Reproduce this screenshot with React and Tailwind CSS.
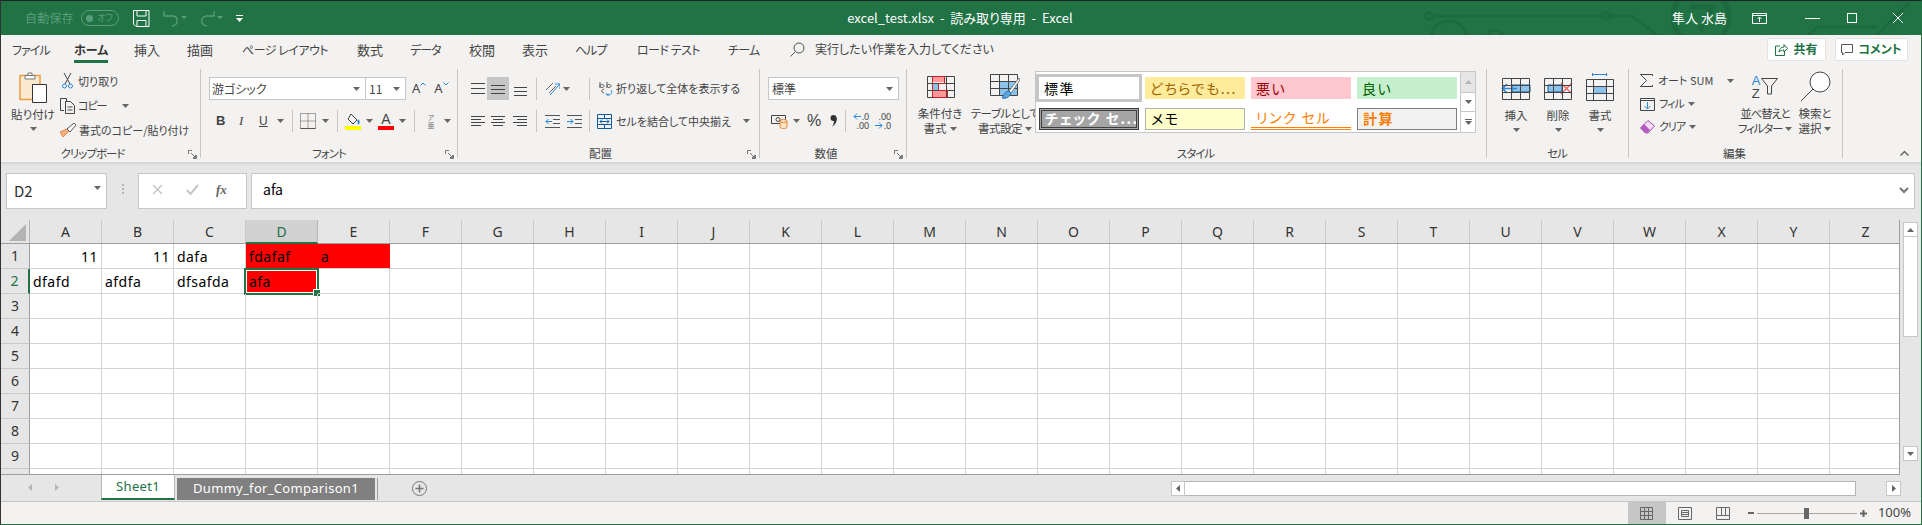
import React from 'react';

const columns = 'ABCDEFGHIJKLMNOPQRSTUVWXYZ'.split('');
const rows = [1, 2, 3, 4, 5, 6, 7, 8, 9, 10];

const Caret = ({ className = '' }) => (
  <svg width="7" height="4" viewBox="0 0 7 4" className={className}>
    <path d="M0 0h7L3.5 4z" fill="#666" />
  </svg>
);

const Launcher = () => (
  <svg width="9" height="9" viewBox="0 0 9 9" className="absolute right-[3px] bottom-[3px]" fill="none" stroke="#777">
    <path d="M.5 4V.5H4M8.5 5v3.5H5M3 3l4.5 4.5M5 7.5h2.500V5" />
  </svg>
);

const Sep = () => <div className="w-px h-[89px] mt-[6px] bg-[#c6c6c6] shrink-0" />;
const MiniSep = () => <div className="w-px h-[22px] bg-[#c6c6c6] shrink-0" />;

const Lines = ({ items }) => (
  <svg width="18" height="16" viewBox="0 0 18 16" stroke="#444" fill="none">
    {items.map(([a, b, y]) => (
      <path key={y} d={`M${a} ${y}.5H${b}`} />
    ))}
  </svg>
);

const Group = ({ width, label, launcher, children }) => (
  <div className={`relative flex flex-col shrink-0 h-full ${width}`}>
    <div className="flex-1 min-h-0">{children}</div>
    <div className="h-[18px] pt-[1px] text-center text-[11.5px] leading-[17px] text-[#444]">{label}</div>
    {launcher && <Launcher />}
  </div>
);

const BigButton = ({ icon, lines, caret, width = 'w-[42px]', tight = '' }) => (
  <div className={`flex flex-col items-center shrink-0 ${width}`}>
    <div className="h-[31px] flex items-center">{icon}</div>
    <div className={`mt-[4px] text-[11.5px] leading-[15px] text-[#444] text-center whitespace-nowrap ${tight}`}>
      {lines.map((line, i) => (
        <div key={i} className="flex items-center justify-center gap-[3px]">
          {line}
          {caret === 'inline' && i === lines.length - 1 && <Caret />}
        </div>
      ))}
    </div>
    {caret === 'below' && <Caret className="mt-[5px]" />}
  </div>
);

const TableIcon = ({ children }) => (
  <svg width="30" height="24" viewBox="0 0 30 24" fill="none">
    {children}
    <path d="M1.500 1.500h27v21h-27zM1.500 8.500h27M1.500 15.500h27M10.500 1.500v21M19.500 1.500v21" stroke="#444" />
  </svg>
);

const StyleCell = ({ className, children }) => (
  <div className={`h-[22px] w-[100px] flex items-center px-[5px] text-[14px] tracking-[1.5px] overflow-hidden whitespace-nowrap ${className}`}>
    {children}
  </div>
);

function TitleBar() {
  return (
    <div className="relative h-[34px] bg-[#217346] flex items-center text-white shrink-0 overflow-hidden">
      <svg width="501" height="34" viewBox="0 0 501 34" fill="none" stroke="#1e6a40" strokeWidth="3" className="absolute left-[1419px] top-0">
        <circle cx="9" cy="15" r="3.500" />
        <path d="M12 15h170" />
        <circle cx="186" cy="15" r="3.500" />
        <path d="M190 15h22l25 19" />
        <path d="M12 34a17 14 0 0 1 34 0M68 34a7 5 0 0 1 14 0" strokeWidth="3" />
        <circle cx="281" cy="16" r="28" strokeWidth="5" />
        <path d="M270 6h22l-12 24" strokeWidth="5" />
        <path d="M388 34l10-8h60M457 34l33-33" />
      </svg>
      <div className="relative flex items-center w-full">
        <span className="ml-[24px] text-[12px] tracking-[0.2px] text-[#5a9c7b]">自動保存</span>
        <div className="ml-[7px] w-[38px] h-[16px] rounded-full border border-[#5a9c7b] flex items-center justify-between pl-[4px] pr-[5px]">
          <span className="w-[7px] h-[7px] rounded-full bg-[#5a9c7b]" />
          <span className="text-[9px] text-[#5a9c7b]">オフ</span>
        </div>
        <svg width="17" height="17" viewBox="0 0 17 17" fill="none" stroke="#fff" className="ml-[14px]">
          <path d="M.5.500h15.500v16H3l-2.500-2.500zM4 .5v5.500h9V.5M4 16.500v-6h9v6" />
        </svg>
        <svg width="24" height="17" viewBox="0 0 24 17" fill="none" stroke="#5a9c7b" strokeWidth="1.300" className="ml-[13px]">
          <path d="M1 6h8c7 0 7 9 0 10M1 1v5h5" />
          <path d="M18 6h6l-3 3z" fill="#5a9c7b" stroke="none" />
        </svg>
        <svg width="24" height="17" viewBox="0 0 24 17" fill="none" stroke="#5a9c7b" strokeWidth="1.300" className="ml-[12px]">
          <path d="M15 6H8c-7 0-7 9 0 10M15 1v5h-5" />
          <path d="M18 6h6l-3 3z" fill="#5a9c7b" stroke="none" />
        </svg>
        <svg width="7" height="7" viewBox="0 0 7 7" fill="#fff" className="ml-[13px]">
          <path d="M0 0h7v1H0zM0 3h7L3.500 7z" />
        </svg>
        <div className="flex-1 text-center text-[13px] whitespace-pre pl-[5px]">
          excel_test.xlsx{'  -  '}読み取り専用{'  -  '}Excel
        </div>
        <span className="text-[13px] mr-[25px]">隼人 水島</span>
        <svg width="15" height="11" viewBox="0 0 15 11" fill="none" stroke="#fff" className="mr-[38px]">
          <path d="M.5.500h14v10H.5zM.5 2.500h14M7.500 9V4.500M5.500 6l2-2 2 2" />
        </svg>
        <div className="w-[15px] h-px bg-white mr-[27px]" />
        <div className="w-[10px] h-[10px] border border-white mr-[36px]" />
        <svg width="10" height="10" viewBox="0 0 10 10" stroke="#fff" className="mr-[18px]">
          <path d="M0 0l10 10M10 0L0 10" />
        </svg>
      </div>
    </div>
  );
}

function TabBar() {
  const tabs = [
    ['ファイル', 'w-[62px]', 'text-[12px] tracking-[-1px]'],
    ['ホーム', 'w-[60px]', 'text-[12px] font-bold text-[#333] border-b-[3px] border-[#217346]'],
    ['挿入', 'w-[53px]', 'text-[13px]'],
    ['描画', 'w-[55px]', 'text-[13px]'],
    ['ページ レイアウト', 'w-[115px]', 'text-[12px] tracking-[-0.5px]'],
    ['数式', 'w-[53px]', 'text-[13px]'],
    ['データ', 'w-[59px]', 'text-[12px] tracking-[-1px]'],
    ['校閲', 'w-[53px]', 'text-[13px]'],
    ['表示', 'w-[53px]', 'text-[13px]'],
    ['ヘルプ', 'w-[62px]', 'text-[12px] tracking-[-1px]'],
    ['ロード テスト', 'w-[91px]', 'text-[12px] tracking-[-0.5px]'],
    ['チーム', 'w-[62px]', 'text-[12px] tracking-[-0.7px]'],
  ];
  return (
    <div className="h-[28px] bg-[#f3f2f1] flex items-center shrink-0 pl-[11px] text-[12px] text-[#444]">
      {tabs.map(([name, slot, cls]) => (
        <div key={name} className={`h-[28px] shrink-0 ${slot}`}>
          <span className={`inline-block h-[28px] pt-[5px] leading-[19px] whitespace-nowrap ${cls}`}>{name}</span>
        </div>
      ))}
      <svg width="15" height="15" viewBox="0 0 15 15" fill="none" stroke="#555">
        <circle cx="9" cy="6" r="5" />
        <path d="M5.500 9.500L.5 14.500" />
      </svg>
      <span className="ml-[10px] whitespace-nowrap">実行したい作業を入力してください</span>
      <div className="ml-auto flex gap-[9px] mr-[13px]">
        <div className="w-[59px] h-[23px] bg-white border border-[#e3e2e1] rounded-[2px] flex items-center justify-center gap-[5px] text-[#217346] font-bold">
          <svg width="13" height="13" viewBox="0 0 13 13" fill="none" stroke="#217346">
            <path d="M5 3H.5v9.500h9V9M4 9c0-3 2-5 5-5V1.500l3.500 4L9 9V7C7 7 5 8 4 9z" />
          </svg>
          共有
        </div>
        <div className="w-[73px] h-[23px] bg-white border border-[#e3e2e1] rounded-[2px] flex items-center justify-center gap-[4px] text-[#217346] font-bold">
          <svg width="13" height="13" viewBox="0 0 13 13" fill="none" stroke="#555">
            <path d="M.5 1.500h11v8H4L1.500 12V9.500h-1z" />
          </svg>
          コメント
        </div>
      </div>
    </div>
  );
}

function Ribbon() {
  return (
    <div className="relative h-[99px] bg-[#f3f2f1] flex shrink-0 text-[11px] text-[#444]">
      <Group width="w-[199px]" label={<span className="ml-[-16px] tracking-[-1px]">クリップボード</span>} launcher>
        <div className="flex pt-[9px] pl-[10px]">
          <BigButton
            width="w-[44px]"
            caret="below"
            lines={['貼り付け']}
            icon={
              <svg width="29" height="31" viewBox="0 0 29 31">
                <path d="M1 3.500h20v24H1z" fill="#fbe9d2" stroke="#ed9c42" strokeWidth="1.500" />
                <path d="M6 3.500h10V7H6zM9 1h4v2.500H9z" fill="#fff" stroke="#777" />
                <path d="M13.500 12.500h14v18h-14z" fill="#fff" stroke="#333" />
              </svg>
            }
          />
          <div className="ml-[5px] flex flex-col mt-[-3px]">
            <div className="h-[24px] flex items-center gap-[5px] pl-[2px]">
              <svg width="11" height="16" viewBox="0 0 11 16" fill="none" stroke="#444">
                <path d="M2 0l6 11M9 0L3 11" />
                <circle cx="2.500" cy="13" r="2" stroke="#2b88d8" />
                <circle cx="8.500" cy="13" r="2" stroke="#2b88d8" />
              </svg>
              切り取り
            </div>
            <div className="h-[25px] flex items-center gap-[2px]">
              <svg width="16" height="16" viewBox="0 0 16 16" fill="none" stroke="#444">
                <path d="M4 12.500H.5V.5h6V3M5.500 3.500h5l4 4v8h-9zM7.500 9h5M7.500 12h5" />
              </svg>
              <span className="tracking-[-1px]">コピー</span>
              <Caret className="ml-[13px]" />
            </div>
            <div className="h-[24px] flex items-center gap-[3px] whitespace-nowrap">
              <svg width="16" height="15" viewBox="0 0 16 15">
                <path d="M9 8L3 14 0 9l7-3z" fill="#f4b183" stroke="#e8853a" />
                <path d="M7 6l7-6 2 2-6 7z" fill="#fff" stroke="#555" />
              </svg>
              書式のコピー/貼り付け
            </div>
          </div>
        </div>
      </Group>
      <Sep />
      <Group width="w-[256px]" label={<span className="tracking-[-1px]">フォント</span>} launcher>
        <div className="pt-[14px] pl-[8px]">
          <div className="flex items-center h-[23px]">
            <div className="w-[157px] h-[23px] bg-white border border-[#c6c6c6] flex items-center justify-between pl-[2px] pr-[5px] text-[12px] text-[#444]">
              游ゴシック
              <Caret />
            </div>
            <div className="w-[40px] h-[23px] bg-white border border-l-0 border-[#c6c6c6] flex items-center justify-between pl-[3px] pr-[5px] text-[12px]">
              11
              <Caret />
            </div>
            <span className="ml-[6px] text-[13px] font-['Noto_Sans',sans-serif]">A</span>
            <svg width="6" height="4" viewBox="0 0 6 4" fill="none" stroke="#2b88d8" className="mb-[9px]"><path d="M.5 3.500L3 1l2.500 2.500" /></svg>
            <span className="ml-[8px] text-[13px] font-['Noto_Sans',sans-serif]">A</span>
            <svg width="6" height="4" viewBox="0 0 6 4" fill="none" stroke="#2b88d8" className="mb-[9px]"><path d="M.5.500L3 3 5.500.500" /></svg>
          </div>
          <div className="mt-[10px] h-[22px] flex items-center font-['Liberation_Sans',sans-serif]">
            <span className="ml-[7px] w-[8px] font-bold text-[13px]">B</span>
            <span className="ml-[15px] w-[6px] italic text-[13px] font-['Liberation_Serif',serif]">I</span>
            <span className="ml-[14px] w-[9px] underline text-[12px]">U</span>
            <Caret className="ml-[9px]" />
            <div className="ml-[8px]"><MiniSep /></div>
            <svg width="16" height="16" viewBox="0 0 16 16" fill="none" stroke="#555" className="ml-[7px]">
              <path d="M.5.500h15v15H.5z" strokeDasharray="1 1" />
              <path d="M8 .5v15M.5 8h15" strokeDasharray="1 1" />
              <path d="M.5 15.500h15" />
            </svg>
            <Caret className="ml-[6px]" />
            <div className="ml-[8px]"><MiniSep /></div>
            <div className="ml-[7px] w-[16px] flex flex-col items-center">
              <svg width="14" height="13" viewBox="0 0 14 13" fill="none" stroke="#444">
                <path d="M5 1l6 6-4 4-5-5z" />
                <path d="M12 7c1 2 1 3 0 4" stroke="#2b88d8" strokeWidth="2" />
              </svg>
              <div className="w-[16px] h-[4px] bg-[#ffff00]" />
            </div>
            <Caret className="ml-[5px]" />
            <div className="ml-[5px] w-[16px] flex flex-col items-center leading-none">
              <span className="text-[14px] leading-[13px] text-[#444]">A</span>
              <div className="w-[16px] h-[4px] bg-[#ff0000]" />
            </div>
            <Caret className="ml-[5px]" />
            <div className="ml-[8px]"><MiniSep /></div>
            <div className="ml-[11px] w-[10px] flex flex-col items-center text-[7px] leading-[8px] text-[#777] font-['Noto_Sans_CJK_JP',sans-serif]">
              <span>ア</span><span>亜</span>
            </div>
            <Caret className="ml-[8px]" />
          </div>
        </div>
      </Group>
      <Sep />
      <Group width="w-[301px]" label={<span className="ml-[-16px]">配置</span>} launcher>
        <div className="pt-[14px] pl-[8px]">
          <div className="flex items-center h-[23px]">
            <div className="w-[21px] flex justify-end"><Lines items={[[2, 16, 2], [2, 16, 7], [2, 16, 12]]} /></div>
            <div className="w-[22px] h-[23px] bg-[#c6c6c6] flex justify-center items-center"><Lines items={[[2, 16, 4], [2, 16, 8], [2, 16, 12]]} /></div>
            <div className="w-[21px] flex justify-center"><Lines items={[[3, 16, 6], [3, 16, 10], [3, 16, 14]]} /></div>
            <div className="ml-[6px]"><MiniSep /></div>
            <svg width="15" height="15" viewBox="0 0 15 15" fill="none" className="ml-[8px]">
              <path d="M1 9l7-7M4 12l7-7" stroke="#666" />
              <path d="M5 14L15 3M10 3h5v5" stroke="#2b88d8" />
            </svg>
            <Caret className="ml-[3px]" />
            <div className="ml-[19px]"><MiniSep /></div>
            <svg width="15" height="16" viewBox="0 0 15 16" fill="none" className="ml-[9px]">
              <path d="M1 1v6M1 5c0-2 4-2 4 0s-4 2-4 0M8 1v6M8 5c0-2 4-2 4 0s-4 2-4 0M5 12c-3-1-3-3 0-4" stroke="#555" />
              <path d="M8 14c4 1 6-3 4-5M7 12l1 2 2-1" stroke="#2b88d8" />
            </svg>
            <span className="ml-[2px] whitespace-nowrap">折り返して全体を表示する</span>
          </div>
          <div className="mt-[10px] h-[22px] flex items-center">
            <div className="w-[21px] flex justify-end"><Lines items={[[2, 16, 3], [2, 12, 6], [2, 16, 9], [2, 12, 12]]} /></div>
            <div className="w-[22px] flex justify-center"><Lines items={[[2, 16, 3], [4, 14, 6], [2, 16, 9], [4, 14, 12]]} /></div>
            <div className="w-[21px] flex justify-center"><Lines items={[[2, 16, 3], [6, 16, 6], [2, 16, 9], [6, 16, 12]]} /></div>
            <div className="ml-[6px]"><MiniSep /></div>
            <svg width="15" height="13" viewBox="0 0 15 13" fill="none" className="ml-[8px]">
              <path d="M0 .5h15M8 4.500h7M8 8.500h7M0 12.500h15" stroke="#555" />
              <path d="M7 6.500H1M3.500 4L1 6.500 3.500 9" stroke="#2b88d8" />
            </svg>
            <svg width="15" height="13" viewBox="0 0 15 13" fill="none" className="ml-[7px]">
              <path d="M0 .5h15M8 4.500h7M8 8.500h7M0 12.500h15" stroke="#555" />
              <path d="M0 6.500h6M3.500 4L6 6.500 3.500 9" stroke="#2b88d8" />
            </svg>
            <div className="ml-[7px]"><MiniSep /></div>
            <svg width="15" height="15" viewBox="0 0 15 15" fill="none" className="ml-[7px]">
              <path d="M.5.500h14v14H.5z" stroke="#0e5c9b" />
              <path d="M.5 4.500h14M.5 10.500h14M7.500.5v4M7.500 10.500v4" stroke="#0e5c9b" />
              <path d="M3 7.500h9M5 5.500l-2 2 2 2M10 5.500l2 2-2 2" stroke="#0e5c9b" />
            </svg>
            <span className="ml-[4px] whitespace-nowrap">セルを結合して中央揃え</span>
            <Caret className="ml-[12px]" />
          </div>
        </div>
      </Group>
      <Sep />
      <Group width="w-[146px]" label={<span className="ml-[-14px]">数値</span>} launcher>
        <div className="pt-[14px] pl-[8px]">
          <div className="w-[131px] h-[23px] bg-white border border-[#c6c6c6] flex items-center justify-between pl-[3px] pr-[5px] text-[12px]">
            標準
            <Caret />
          </div>
          <div className="mt-[10px] h-[22px] flex items-center">
            <svg width="17" height="16" viewBox="0 0 17 16" fill="none" className="ml-[3px]">
              <path d="M.5 2.500h14v8H.5z" stroke="#444" />
              <circle cx="7" cy="6.500" r="2" stroke="#444" />
              <path d="M9 8v6c0 2 7 2 7 0V8" fill="#fbe3c3" stroke="#e8853a" />
              <ellipse cx="12.500" cy="8" rx="3.500" ry="1.500" fill="#fbe3c3" stroke="#e8853a" />
            </svg>
            <Caret className="ml-[5px]" />
            <span className="ml-[7px] text-[16px] leading-none font-['Liberation_Sans',sans-serif]">%</span>
            <svg width="7" height="12" viewBox="0 0 7 12" fill="#333" className="ml-[9px]">
              <circle cx="3.500" cy="3" r="3" />
              <path d="M4 3h3c0 4-2 7-5 9 2-3 2-5 2-9z" />
            </svg>
            <div className="ml-[8px]"><MiniSep /></div>
            <div className="ml-[7px] w-[16px] flex flex-col text-[9px] leading-[9px] font-['Noto_Sans',sans-serif]">
              <span className="flex items-center justify-between">
                <svg width="8" height="7" viewBox="0 0 8 7" fill="none" stroke="#2b88d8"><path d="M8 3.500H1M4 .5l-3 3 3 3" /></svg>
                .0
              </span>
              <span className="text-right">.00</span>
            </div>
            <div className="ml-[6px] w-[16px] flex flex-col text-[9px] leading-[9px] font-['Noto_Sans',sans-serif]">
              <span className="text-right">.00</span>
              <span className="flex items-center justify-between">
                <svg width="8" height="7" viewBox="0 0 8 7" fill="none" stroke="#2b88d8"><path d="M0 3.500h7M4 .5l3 3-3 3" /></svg>
                .0
              </span>
            </div>
          </div>
        </div>
      </Group>
      <Sep />
      <Group width="w-[579px]" label={<span className="ml-[-2px] tracking-[-1px]">スタイル</span>}>
        <div className="flex pt-[8px] pl-[8px] items-start">
          <BigButton
            width="w-[50px]"
            caret="inline"
            lines={['条件付き', '書式']}
            icon={
              <svg width="28" height="24" viewBox="0 0 28 24" fill="none" className="ml-[1px]">
                <path d="M5 1h12v6H5z" fill="#ff9999" />
                <path d="M5 8h6v7H5z" fill="#8cc3ea" />
                <path d="M5 15h15v7H5z" fill="#ff9999" />
                <path d="M.5 1.500h27v21H.5zM.5 8.500h27M.5 15.500h27M5.500 1.500v21M19.500 1.500v21" stroke="#444" />
                <path d="M5.500 1.500h12v7h-6v7h9v7h-15z" stroke="#c4202a" />
              </svg>
            }
          />
          <div className="ml-[9px]">
            <BigButton
              width="w-[62px]"
              caret="inline"
              tight="tracking-[-0.5px]"
              lines={['テーブルとして', '書式設定']}
              icon={
                <svg width="30" height="27" viewBox="0 0 30 27" fill="none">
                  <path d="M9 8h19v14H9z" fill="#8cc3ea" />
                  <path d="M.5 1.500h27v21H.5zM.5 8.500h27M.5 15.500h27M9.500 1.500v21M18.500 1.500v21" stroke="#444" />
                  <path d="M29 5L19 18l2 2L30 7z" fill="#fff" stroke="#777" />
                  <path d="M19 18c-4 0-5 4-7 7 4 1 8-1 9-5z" fill="#5ea5dc" stroke="#1f6fb5" />
                </svg>
              }
            />
          </div>
          <div className="ml-[-1px] w-[441px] h-[62px] bg-white border border-[#c6c6c6] flex justify-between">
            <div className="grid grid-cols-[repeat(4,100px)] gap-[6px] pl-[3px] pt-[5px]">
              <StyleCell className="bg-white text-black ring-[3px] ring-[#c6c6c6]">標準</StyleCell>
              <StyleCell className="bg-[#ffeb9c] text-[#9c6500]">どちらでも...</StyleCell>
              <StyleCell className="bg-[#ffc7ce] text-[#9c0006]">悪い</StyleCell>
              <StyleCell className="bg-[#c6efce] text-[#006100]">良い</StyleCell>
              <StyleCell className="bg-[#a5a5a5] text-white font-bold border-[3px] border-double border-[#3f3f3f] !px-[3px]">チェック セ...</StyleCell>
              <StyleCell className="bg-[#ffffcc] text-black border border-[#b2b2b2]">メモ</StyleCell>
              <StyleCell className="bg-white text-[#fa7d00] border-b-[3px] border-double border-[#ff8001]">リンク セル</StyleCell>
              <StyleCell className="bg-[#f2f2f2] text-[#fa7d00] font-bold border border-[#7f7f7f]">計算</StyleCell>
            </div>
            <div className="w-[15px] border-l border-[#c6c6c6] flex flex-col">
              <div className="h-[21px] bg-[#e6e6e6] border-b border-[#c6c6c6] flex items-center justify-center">
                <svg width="7" height="4" viewBox="0 0 7 4"><path d="M0 4h7L3.500 0z" fill="#b5b5b5" /></svg>
              </div>
              <div className="h-[19px] border-b border-[#c6c6c6] flex items-center justify-center">
                <Caret />
              </div>
              <div className="flex-1 flex flex-col items-center justify-center gap-[1px]">
                <div className="w-[7px] h-px bg-[#666]" />
                <Caret />
              </div>
            </div>
          </div>
        </div>
      </Group>
      <Sep />
      <Group width="w-[141px]" label={<span className="ml-[-1px] tracking-[-1px]">セル</span>}>
        <div className="flex pt-[10px] pl-[8px]">
          <BigButton
            caret="below"
            lines={['挿入']}
            icon={
              <TableIcon>
                <path d="M11 8h18v7H11z" fill="#8cc3ea" stroke="#0e5c9b" />
                <path d="M16 11.500H2M6 7l-4.500 4.500L6 16" stroke="#2b88d8" strokeWidth="1.500" />
              </TableIcon>
            }
          />
          <BigButton
            caret="below"
            lines={['削除']}
            icon={
              <TableIcon>
                <path d="M5 8h14v7H5z" fill="#8cc3ea" stroke="#0e5c9b" />
                <path d="M18 6l11 11M29 6L18 17" stroke="#f25c5c" strokeWidth="1.300" />
              </TableIcon>
            }
          />
          <BigButton
            caret="below"
            lines={['書式']}
            icon={
              <svg width="30" height="31" viewBox="0 0 30 31" fill="none">
                <path d="M7 1.500h15M7.500 0v3M21.500 0v3" stroke="#2b88d8" />
                <path d="M8 13h14v8H8z" fill="#8cc3ea" />
                <path d="M1.500 6.500h27v21h-27zM1.500 13.500h27M1.500 20.500h27M8.500 6.500v21M21.500 6.500v21" stroke="#444" />
              </svg>
            }
          />
        </div>
      </Group>
      <Sep />
      <Group width="w-[213px]" label={<span className="ml-[-2px]">編集</span>}>
        <div className="flex pt-[8px] pl-[11px]">
          <div className="w-[97px] flex flex-col mt-[-2px]">
            <div className="h-[23px] flex items-center gap-[5px] whitespace-nowrap">
              <svg width="13" height="13" viewBox="0 0 13 13" fill="none" stroke="#444"><path d="M12.500 2V.5H.5l6 6-6 6h12V11" /></svg>
              <span>オート SUM</span>
              <Caret className="ml-[9px]" />
            </div>
            <div className="h-[23px] flex items-center gap-[4px]">
              <svg width="15" height="14" viewBox="0 0 15 14" fill="none">
                <path d="M.5 1.500h14v12H.5zM.5 3.500h14" stroke="#444" />
                <path d="M7.500 5v7M4.500 9l3 3 3-3" stroke="#2b88d8" />
              </svg>
              <span className="tracking-[-1px]">フィル</span>
              <Caret />
            </div>
            <div className="h-[23px] flex items-center gap-[4px]">
              <svg width="15" height="14" viewBox="0 0 15 14">
                <path d="M5.500 13L.5 8 8 .5 14.500 6 8 13z" fill="#f3def5" stroke="#a64ab5" />
                <path d="M.5 8L4 4l6 6-3 3H5z" fill="#b25bc0" />
              </svg>
              <span className="tracking-[-1px]">クリア</span>
              <Caret />
            </div>
          </div>
          <BigButton
            width="w-[56px]"
            caret="inline"
            tight="tracking-[-1.2px]"
            lines={['並べ替えと', 'フィルター']}
            icon={
              <div className="flex items-center">
                <div className="flex flex-col text-[13px] leading-[13px] font-['Liberation_Sans',sans-serif] mr-[1px]">
                  <span className="text-[#2b88d8]">A</span>
                  <span>Z</span>
                </div>
                <svg width="17" height="17" viewBox="0 0 17 17" fill="none" stroke="#444"><path d="M.5.500h16L10.500 8v8h-4V8z" /></svg>
              </div>
            }
          />
          <BigButton
            width="w-[44px]"
            caret="inline"
            lines={['検索と', '選択']}
            icon={
              <svg width="31" height="31" viewBox="0 0 31 31" fill="none" stroke="#444">
                <circle cx="20" cy="11" r="10" fill="#fff" />
                <path d="M13 18L1 30" />
              </svg>
            }
          />
        </div>
      </Group>
      <Sep />
      <svg width="9" height="6" viewBox="0 0 9 6" fill="none" stroke="#666" strokeWidth="1.500" className="absolute right-[12px] bottom-[6px]">
        <path d="M.5 5.500l4-4 4 4" />
      </svg>
    </div>
  );
}

function FormulaBar() {
  return (
    <div className="h-[58px] bg-[#e6e6e6] shrink-0">
      <div className="h-[4px] bg-gradient-to-b from-[#d2d2d2] to-[#e6e6e6]" />
      <div className="mt-[7px] flex h-[36px] pl-[5px]">
        <div className="w-[101px] bg-white border border-[#c6c6c6] flex items-center justify-between pl-[7px] pr-[5px] text-[15px] text-[#333]">
          D2
          <Caret className="mb-[6px]" />
        </div>
        <div className="w-[31px] flex flex-col items-center justify-center gap-[2px] pb-[4px]">
          <span className="w-[2px] h-[2px] bg-[#b5b5b5]" />
          <span className="w-[2px] h-[2px] bg-[#b5b5b5]" />
          <span className="w-[2px] h-[2px] bg-[#b5b5b5]" />
        </div>
        <div className="w-[109px] bg-white border border-[#c6c6c6] flex items-center pb-[3px]">
          <svg width="11" height="11" viewBox="0 0 11 11" stroke="#c6c6c6" strokeWidth="1.500" className="ml-[13px]"><path d="M1 1l9 9M10 1l-9 9" /></svg>
          <svg width="13" height="11" viewBox="0 0 13 11" fill="none" stroke="#c6c6c6" strokeWidth="2" className="ml-[23px]"><path d="M1 6l3.500 4L12 1" /></svg>
          <span className="ml-[17px] text-[13px] italic font-bold text-[#666] font-['Liberation_Serif',serif]">fx</span>
        </div>
        <div className="ml-[4px] w-[1664px] bg-white border border-[#c6c6c6] flex items-center justify-between pl-[11px] pr-[5px] pb-[3px] text-[14px] text-black">
          afa
          <svg width="10" height="7" viewBox="0 0 10 7" fill="none" stroke="#777" strokeWidth="2" className="mt-[2px]"><path d="M1 1l4 4 4-4" /></svg>
        </div>
      </div>
    </div>
  );
}

function Cell({ col, row }) {
  const selected = col === 'D' && row === 2;
  const red = (row === 1 && (col === 'D' || col === 'E')) || selected;
  const right = row === 1 && (col === 'A' || col === 'B');
  const values = { A1: '11', B1: '11', C1: 'dafa', D1: 'fdafaf', E1: 'a', A2: 'dfafd', B2: 'afdfa', C2: 'dfsafda', D2: 'afa' };
  const value = values[col + row];
  return (
    <div
      className={`relative w-[72px] h-[25px] shrink-0 border-r border-b px-[3px] pt-[1px] text-[14px] leading-[23px] tracking-[0.45px] text-black whitespace-nowrap ${
        red ? 'bg-[#ff0000] border-[#ff0000] border-b-[#d4d4d4]' : 'border-[#d4d4d4]'
      } ${right ? 'text-right' : ''}`}
    >
      {value}
      {selected && (
        <div className="absolute left-[-2px] top-[-1px] w-[75px] h-[27px] border-[2px] border-[#217346] shadow-[inset_0_0_0_1px_#fff]">
          <div className="absolute right-[-3px] bottom-[-3px] w-[6px] h-[6px] bg-[#217346] shadow-[0_0_0_1px_#fff]" />
        </div>
      )}
    </div>
  );
}

function Sheet() {
  return (
    <div className="h-[255px] flex shrink-0 bg-[#e6e6e6]">
      <div className="w-[1899px] h-[255px] overflow-hidden bg-white border-r border-b border-[#9e9e9e] font-['Noto_Sans',sans-serif]">
        <div className="flex h-[24px] bg-[#e6e6e6] border-b border-[#9e9e9e] text-[14px] text-[#333]">
          <div className="w-[29px] shrink-0 border-r border-[#b5b5b5] flex items-end justify-end pr-[3px] pb-[2px]">
            <svg width="17" height="17" viewBox="0 0 17 17"><path d="M17 0v17H0z" fill="#b4b4b4" /></svg>
          </div>
          {columns.map(c => (
            <div
              key={c}
              className={`w-[72px] shrink-0 text-center leading-[23px] border-r ${
                c === 'D' ? 'bg-[#d2d2d2] text-[#217346] border-[#b5b5b5] border-b-2 border-b-[#217346] h-[24px]' : 'border-[#c9c9c9]'
              }`}
            >
              {c}
            </div>
          ))}
        </div>
        {rows.map(r => (
          <div key={r} className="flex h-[25px]">
            <div
              className={`w-[29px] shrink-0 bg-[#e6e6e6] text-center text-[14px] leading-[24px] border-b ${
                r === 2 ? 'text-[#217346] border-r-2 border-[#c9c9c9] border-r-[#217346]' : 'text-[#333] border-r border-[#c9c9c9] border-r-[#9e9e9e]'
              }`}
            >
              {r < 10 ? r : ''}
            </div>
            {columns.map(c => (
              <Cell key={c} col={c} row={r} />
            ))}
          </div>
        ))}
      </div>
      <div className="ml-[3px] w-[15px] flex flex-col mt-[2px]">
        <div className="h-[15px] bg-white border border-[#c6c6c6] flex items-center justify-center">
          <svg width="7" height="4" viewBox="0 0 7 4"><path d="M0 4h7L3.500 0z" fill="#666" /></svg>
        </div>
        <div className="h-[100px] bg-white border-x border-b border-[#c6c6c6]" />
        <div className="flex-1" />
        <div className="h-[15px] bg-white border border-[#c6c6c6] flex items-center justify-center mb-[14px]">
          <Caret />
        </div>
      </div>
    </div>
  );
}

function SheetTabs() {
  return (
    <div className="h-[27px] bg-[#e6e6e6] flex border-b border-[#c6c6c6] shrink-0 font-['Noto_Sans',sans-serif]">
      <div className="w-[100px] flex items-center pb-[2px] pl-[27px] gap-[23px]">
        <svg width="4" height="7" viewBox="0 0 4 7"><path d="M4 0v7L0 3.500z" fill="#b5b5b5" /></svg>
        <svg width="4" height="7" viewBox="0 0 4 7"><path d="M0 0v7l4-3.500z" fill="#b5b5b5" /></svg>
      </div>
      <div className="w-[74px] h-[25px] bg-white border-b-2 border-[#217346] border-x border-x-[#b5b5b5] text-center text-[13px] leading-[22px] tracking-[0.3px] text-[#217346]">
        Sheet1
      </div>
      <div className="ml-[2px] mt-[3px] w-[198px] h-[22px] bg-[#808080] text-center text-[13px] leading-[21px] tracking-[0.3px] text-white">
        Dummy_for_Comparison1
      </div>
      <div className="ml-[2px] mt-[3px] w-px h-[22px] bg-[#9e9e9e]" />
      <svg width="15" height="15" viewBox="0 0 15 15" fill="none" stroke="#777" className="ml-[34px] mt-[6px]">
        <circle cx="7.500" cy="7.500" r="7" />
        <path d="M7.500 3.500v8M3.500 7.500h8" strokeWidth="1.500" />
      </svg>
      <div className="ml-[744px] mt-[6px] h-[15px] flex w-[731px]">
        <div className="w-[14px] bg-white border border-[#c6c6c6] flex items-center justify-center">
          <svg width="4" height="7" viewBox="0 0 4 7"><path d="M4 0v7L0 3.500z" fill="#666" /></svg>
        </div>
        <div className="w-[671px] bg-white border-y border-r border-[#b5b5b5]" />
        <div className="w-[28px]" />
        <div className="ml-[2px] w-[15px] bg-white border border-[#c6c6c6] flex items-center justify-center">
          <svg width="4" height="7" viewBox="0 0 4 7"><path d="M0 0v7l4-3.500z" fill="#666" /></svg>
        </div>
      </div>
    </div>
  );
}

function StatusBar() {
  return (
    <div className="h-[22px] bg-[#f3f2f1] flex items-center justify-end text-[#444] shrink-0 font-['Noto_Sans',sans-serif]">
      <div className="w-[38px] h-[22px] bg-[#c6c6c6] flex items-center justify-center">
        <svg width="13" height="13" viewBox="0 0 13 13" fill="none" stroke="#666"><path d="M.5.500h12v12H.5zM.5 4.500h12M.5 8.500h12M4.500.5v12M8.500.5v12" /></svg>
      </div>
      <svg width="14" height="13" viewBox="0 0 14 13" fill="none" stroke="#666" className="ml-[12px]"><path d="M.5.500h13v12H.5zM3.500 3.500h7v6h-7zM3.500 5.500h7M3.500 7.500h7" /></svg>
      <svg width="14" height="13" viewBox="0 0 14 13" fill="none" stroke="#666" className="ml-[24px]"><path d="M.5.500h13v12H.5zM.5 8.500h13M5.500.5v8M9.500.5v8" /></svg>
      <div className="ml-[18px] w-[6px] h-[2px] bg-[#666]" />
      <div className="ml-[3px] relative w-[100px] h-px bg-[#a6a6a6]">
        <div className="absolute left-[47px] top-[-5px] w-[5px] h-[11px] bg-[#666]" />
      </div>
      <svg width="7" height="7" viewBox="0 0 7 7" stroke="#666" strokeWidth="2" className="ml-[3px]"><path d="M3.500 0v7M0 3.500h7" /></svg>
      <span className="ml-[11px] mr-[10px] text-[13px]">100%</span>
    </div>
  );
}

export default function App() {
  return (
    <div className="w-[1922px] h-[525px] overflow-hidden flex flex-col bg-[#f3f2f1] border-t border-l border-t-[#222] border-l-[#333] border-r border-r-[#217346] border-b border-b-[#217346] [font-feature-settings:'palt'] font-['Noto_Sans_CJK_JP','Noto_Sans',sans-serif]">
      <TitleBar />
      <TabBar />
      <Ribbon />
      <FormulaBar />
      <Sheet />
      <SheetTabs />
      <StatusBar />
    </div>
  );
}
